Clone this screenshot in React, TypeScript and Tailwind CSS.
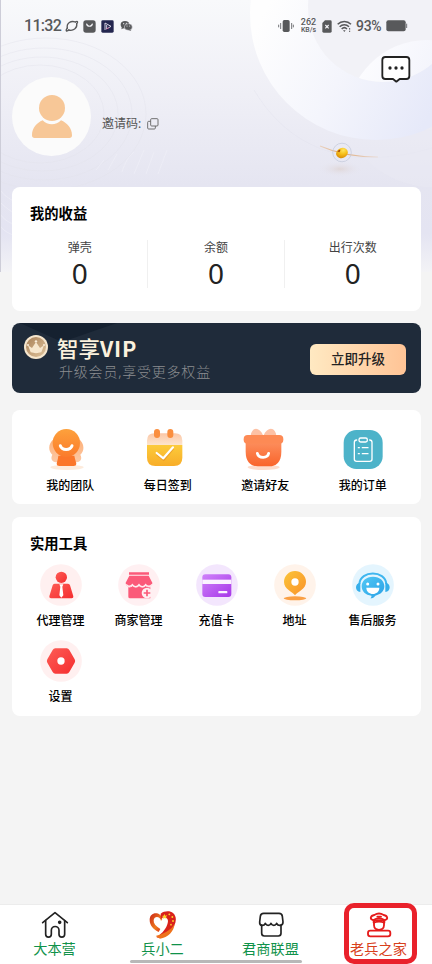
import type { ReactNode } from "react"

const cjk = "font-['Noto_Sans','Noto_Sans_CJK_SC',sans-serif]"

function HeaderArt(){
  return(
    <svg className="absolute left-0 top-0" width="432" height="272" viewBox="0 0 432 272" fill="none">
      <defs>
        <linearGradient id="sky" x1="0" y1="0" x2="0" y2="1">
          <stop offset="0" stopColor="#f8f9fb" />
          <stop offset="0.35" stopColor="#efeff6" />
          <stop offset="0.68" stopColor="#e5e5f1" />
          <stop offset="0.86" stopColor="#e4e4f2" />
          <stop offset="1" stopColor="#f3f3f6" />
        </linearGradient>
        <linearGradient id="ring" x1="260" y1="20" x2="432" y2="110" gradientUnits="userSpaceOnUse">
          <stop offset="0" stopColor="#fefefe" />
          <stop offset="0.5" stopColor="#f4f5fc" />
          <stop offset="1" stopColor="#e6e9f9" />
        </linearGradient>
        <linearGradient id="petal" x1="360" y1="50" x2="425" y2="80" gradientUnits="userSpaceOnUse">
          <stop offset="0" stopColor="#fdfdff" />
          <stop offset="1" stopColor="#f4f5fc" />
        </linearGradient>
        <linearGradient id="orbit" x1="318" y1="0" x2="380" y2="0" gradientUnits="userSpaceOnUse">
          <stop offset="0" stopColor="#e9b98b" stopOpacity="0.4" />
          <stop offset="0.4" stopColor="#dda36b" />
          <stop offset="1" stopColor="#e9b98b" stopOpacity="0.2" />
        </linearGradient>
        <radialGradient id="glow">
          <stop offset="0" stopColor="#d9c8c0" stopOpacity="0.5" />
          <stop offset="1" stopColor="#e4e4f0" stopOpacity="0" />
        </radialGradient>
        <radialGradient id="gold" cx="0.7" cy="0.3" r="0.8">
          <stop offset="0" stopColor="#ffe45c" />
          <stop offset="0.5" stopColor="#f6be18" />
          <stop offset="1" stopColor="#d88a08" />
        </radialGradient>
        <clipPath id="inner"><circle cx="383" cy="7" r="75" /></clipPath>
      </defs>
      <rect width="432" height="272" fill="url(#sky)" />
      <g stroke="#e2e2ec" strokeOpacity="0.45">
        <ellipse cx="46" cy="114" rx="100" ry="76" />
        <ellipse cx="44" cy="114" rx="88" ry="66" />
        <ellipse cx="42" cy="114" rx="76" ry="57" />
        <ellipse cx="40" cy="114" rx="64" ry="49" />
      </g>
      <g stroke="#f0f0f8" strokeOpacity="0.55">
        <path d="M96 170l8-10M108 170l9-16M122 172c3-10 7-16 12-20M134 174l10-24M146 174l8-22M158 174l9-24" />
        <path d="M0 190c6 8 14 12 24 14M0 202c8 8 14 12 24 14M0 214c6 8 12 10 20 12M0 226c5 6 10 8 16 10" />
      </g>
      <path d="M254 90C290 150 350 172 432 148" stroke="#dfdfea" strokeOpacity="0.35" />
      <path d="M352 138C366 165 388 182 424 187L432 187V130z" fill="#e9e9f4" fillOpacity="0.5" />
      <circle cx="376" cy="14" r="126" fill="url(#ring)" />
      <circle cx="383" cy="7" r="75" fill="#f2f2f7" />
      <circle cx="427" cy="120" r="80" fill="url(#petal)" clipPath="url(#inner)" />
      <ellipse cx="340" cy="169" rx="22" ry="8" fill="url(#glow)" />
      <path d="M320 146C336 153 354 157 378 157" stroke="url(#orbit)" strokeWidth="1.2" />
      <circle cx="342" cy="152.500" r="9.300" stroke="#c3c8da" strokeWidth="0.7" />
      <ellipse cx="342" cy="153" rx="6" ry="5" transform="rotate(-25 342 153)" fill="url(#gold)" />
      <path d="M337.500 151.500c1-1.600 2-2 3-1.800l-1 2.600z" fill="#a34a10" />
      <path d="M0.500 0V272" stroke="#cdcdd8" />
    </svg>
  )
}

function StatusBar(){
  return(
    <div className="h-[52px] pl-6 pr-[24px] flex items-center justify-between text-[#58595b]">

      <div className="flex items-center">
        <span className="w-[41px] font-['Roboto',sans-serif] font-medium text-[16px] leading-none tracking-[-0.7px]">11:32</span>

        <svg width="14" height="14" viewBox="0 0 42 42" fill="none" stroke="currentColor" strokeWidth="4" strokeLinecap="round">
          <path d="M7 27C4 12 18 4 31 9" /><path d="M35 14C38 28 24 37 11 33" />
          <path d="M7 27c-6 8-3 12 4 6M31 9c7-4 9 0 4 5" />
        </svg>

        <svg className="ml-[4px]" width="13" height="13" viewBox="0 0 39 39">
          <rect x="1" y="1" width="37" height="37" rx="8" fill="currentColor" />
          <path d="M11 12c2 9 15 9 17 0" fill="none" stroke="#f3f3f7" strokeWidth="3.500" strokeLinecap="round" />
        </svg>

        <svg className="ml-[5px]" width="13" height="13" viewBox="0 0 39 39" fill="none">
          <rect x="1" y="1" width="37" height="37" rx="4" fill="#23264f" />
          <path d="M12 9v21M12 9l18 10-13 8V15" stroke="#ebe5f3" strokeWidth="2.600" />
          <path d="M17 27l6-4" stroke="#d4548e" strokeWidth="2.600" />
        </svg>

        <svg className="ml-[6px]" width="13" height="12" viewBox="0 0 39 36">
          <ellipse cx="15" cy="14" rx="13" ry="11" fill="currentColor" />
          <path d="M6 20l-2 8 8-4z" fill="currentColor" />
          <ellipse cx="25" cy="21" rx="12" ry="10" fill="currentColor" stroke="#f1f1f6" strokeWidth="1.500" />
          <path d="M30 28l4 5-9-3z" fill="currentColor" />
          <g fill="#f1f1f6"><circle cx="11" cy="11" r="1.800" /><circle cx="19" cy="10" r="1.800" /><circle cx="21" cy="18" r="1.500" /><circle cx="29" cy="18" r="1.500" /></g>
        </svg>
      </div>

      <div className="flex items-center font-['Roboto',sans-serif] font-medium">
        <svg width="16" height="14" viewBox="0 0 48 42">
          <rect x="14" y="3" width="21" height="36" rx="5" fill="currentColor" />
          <path d="M8 12v18M2 17v8M41 12v18M46 17v8" stroke="currentColor" strokeWidth="2.500" />
        </svg>

        <div className="ml-[5px] w-[19px] text-center leading-[8px] text-[9px]">
          <div>262</div>
          <div className="text-[7px] whitespace-nowrap">KB/s</div>
        </div>

        <svg className="ml-[4px]" width="10" height="13" viewBox="0 0 30 39">
          <path d="M9 1h16a4 4 0 0 1 4 4v29a4 4 0 0 1-4 4H5a4 4 0 0 1-4-4V9z" fill="currentColor" />
          <path d="M10 15l10 10M20 15L10 25" stroke="#f3f3f7" strokeWidth="3.500" />
        </svg>

        <svg className="ml-[5px]" width="15" height="13" viewBox="0 0 45 39" fill="none" stroke="currentColor" strokeWidth="4.500">
          <path d="M2 13C13 2 31 2 42 13M8 20c8-8 20-8 28 0M14 27c5-5 11-5 16 0" />
          <path d="M18 31h8l-4 5z" fill="currentColor" stroke="none" />
          <path d="M38 24v5M38 32v4" strokeWidth="3" />
        </svg>

        <span className="ml-[4px] w-[27px] text-[14px] leading-none tracking-[-0.3px]">93%</span>

        <svg className="ml-[3px]" width="22" height="12" viewBox="0 0 66 36">
          <rect x="1" y="1" width="58" height="33" rx="6" fill="currentColor" />
          <path d="M62 11v13" stroke="currentColor" strokeWidth="2.500" />
        </svg>
      </div>

    </div>
  )
}

function Profile(){
  return(
    <div className="h-[104px] pl-3 pr-[20px] flex">
      <div className="self-end w-[79px] h-[79px] rounded-full bg-[#fbfbfb] flex items-center justify-center">
        <svg width="42" height="46" viewBox="0 0 126 138" fill="#f7c797">
          <circle cx="63" cy="42" r="39" />
          <path d="M35 79c14 16 41 16 55 0 18 8 33 23 33 45q0 8-8 8H11q-8 0-8-8c0-22 14-37 32-45z" />
        </svg>
      </div>

      <div className="ml-[11px] mt-[63px] h-[18px] flex items-center text-[12px] text-[#555]">
        <span>邀请码:</span>
        <svg className="ml-[6px]" width="12" height="12" viewBox="0 0 36 36" fill="none" stroke="#666" strokeWidth="2.800">
          <rect x="11" y="2" width="22" height="22" rx="3" />
          <path d="M11 10H5q-3 0-3 3v17q0 3 3 3h17q3 0 3-3v-6" />
        </svg>
      </div>

      <svg className="ml-auto mt-[3px]" width="31" height="28" viewBox="0 0 93 84" fill="none">
        <path d="M13 6H76q9 0 9 9v48q0 9-9 9H56L46 80 36 72H13q-9 0-9-9V15q0-9 9-9z" fill="#fff" stroke="#222" strokeWidth="5.500" strokeLinejoin="round" />
        <circle cx="27" cy="39" r="5" fill="#222" /><circle cx="45" cy="39" r="5" fill="#222" /><circle cx="63" cy="39" r="5" fill="#222" />
      </svg>
    </div>
  )
}

const stats = [
  { label: "弹壳", value: 0 },
  { label: "余额", value: 0 },
  { label: "出行次数", value: 0 }
]

function Medal(){
  return(
    <svg width="26" height="26" viewBox="0 0 78 78">
      <defs>
        <linearGradient id="medal" x1="0" y1="0" x2="1" y2="1">
          <stop offset="0" stopColor="#a98158" /><stop offset="1" stopColor="#dfc39c" />
        </linearGradient>
      </defs>
      <circle cx="39" cy="39" r="36" fill="#f6e6cd" />
      <circle cx="39" cy="39" r="30" fill="url(#medal)" />
      <path d="M15 34l12 8 12-18 12 18 12-8-8 21q-16 5-32 0z" fill="#f6e6cd" />
      <g fill="#f9edda"><circle cx="39" cy="22" r="3.500" /><circle cx="15" cy="33" r="3" /><circle cx="63" cy="33" r="3" /></g>
    </svg>
  )
}

// 44px artwork used in the shortcut row
function TeamIcon(){
  return(
    <svg width="44" height="44" viewBox="0 0 132 132">
      <defs>
        <linearGradient id="team" x1="0" y1="0" x2="0" y2="1"><stop offset="0" stopColor="#fda13c" /><stop offset="1" stopColor="#fb7b2c" /></linearGradient>
        <linearGradient id="hair" x1="0" y1="0" x2="0" y2="1"><stop offset="0" stopColor="#fdb078" /><stop offset="1" stopColor="#fdc9a6" /></linearGradient>
      </defs>
      <ellipse cx="57" cy="121" rx="50" ry="8" fill="#fdebdc" />
      <path d="M18 36C1 48-1 70 13 83c-6 12-2 20 10 23h64c12-3 16-11 10-23 14-13 12-35-5-47z" fill="url(#hair)" />
      <path d="M31 86h48c2 12 6 20 6 25q0 6-8 6H34q-8 0-8-6c0-5 4-13 5-25z" fill="#fb762a" />
      <ellipse cx="55" cy="48" rx="41" ry="42" fill="url(#team)" />
      <path d="M37 56c5 15 30 15 35 0" fill="none" stroke="#fff" strokeWidth="9" strokeLinecap="round" />
    </svg>
  )
}

function CalendarIcon(){
  return(
    <svg width="44" height="44" viewBox="0 0 132 132">
      <defs>
        <linearGradient id="cal" x1="0" y1="0" x2="0" y2="1"><stop offset="0" stopColor="#fccb3b" /><stop offset="1" stopColor="#f8ad29" /></linearGradient>
        <linearGradient id="calTop" x1="0" y1="0" x2="0" y2="1"><stop offset="0" stopColor="#fbc7a7" /><stop offset="1" stopColor="#fde5cd" /></linearGradient>
      </defs>
      <path d="M3 54V41q0-22 22-22h62q22 0 22 22v13z" fill="url(#calTop)" />
      <path d="M3 54h106v38q0 25-25 25H28Q3 117 3 92z" fill="url(#cal)" />
      <rect x="24" y="6" width="18" height="27" rx="9" fill="#fa8e3e" />
      <rect x="64" y="6" width="18" height="27" rx="9" fill="#fa8e3e" />
      <path d="M33 82l20 16 29-34" fill="none" stroke="#e18c22" strokeWidth="7" opacity="0.55" />
      <path d="M32 78l20 16 29-33" fill="none" stroke="#fff" strokeWidth="6.500" strokeLinecap="round" strokeLinejoin="round" />
    </svg>
  )
}

function GiftIcon(){
  return(
    <svg width="44" height="44" viewBox="0 0 132 132">
      <defs>
        <linearGradient id="gift" x1="0" y1="0" x2="0" y2="1"><stop offset="0" stopColor="#fd9160" /><stop offset="1" stopColor="#f9642b" /></linearGradient>
      </defs>
      <ellipse cx="62" cy="121" rx="48" ry="8" fill="#fddccc" />
      <path d="M61 26C51 4 36 0 28 12c-4 6-6 11-3 18h73c3-7 1-12-3-18-8-12-24-8-34 14z" fill="#fdc1a5" />
      <path d="M8 40h107v35c0 30-16 43-36 43H44C24 118 8 105 8 75z" fill="url(#gift)" />
      <rect x="2" y="24" width="119" height="26" rx="12" fill="#fd8a55" />
      <path d="M43 79c4 16 31 16 34 0" fill="none" stroke="#fff" strokeWidth="8.500" strokeLinecap="round" />
    </svg>
  )
}

function OrderIcon(){
  return(
    <svg width="44" height="44" viewBox="0 0 132 132" fill="none">
      <rect x="8" y="9" width="117" height="117" rx="38" fill="#4db3c9" />
      <g stroke="#fff" strokeWidth="4" strokeLinecap="round">
        <path d="M47 39q-7 0-7 7v51q0 6 7 6h39q7 0 7-6V46q0-7-7-7" />
        <rect x="54" y="33" width="25" height="12" rx="5" />
        <path d="M64 62h17M64 80h17M52 62h3M52 80h3" />
      </g>
    </svg>
  )
}

// 42px round icons of the tools grid
function AgentIcon(){
  return(
    <svg width="42" height="42" viewBox="0 0 126 126">
      <defs><linearGradient id="agent" x1="0" y1="0" x2="1" y2="1"><stop offset="0" stopColor="#fd5d56" /><stop offset="1" stopColor="#f52d2f" /></linearGradient></defs>
      <circle cx="63" cy="63" r="62.500" fill="#fff0f0" />
      <circle cx="64" cy="40" r="17" fill="url(#agent)" />
      <path d="M44 59h40q5 0 6 5l10 33q1 6-5 6H33q-6 0-5-6l10-33q1-5 6-5z" fill="url(#agent)" />
      <path d="M58 61h12l-3 7 3 26-6 7-6-7 3-26z" fill="#fff" />
    </svg>
  )
}

function ShopIcon(){
  return(
    <svg width="42" height="42" viewBox="0 0 126 126">
      <circle cx="63" cy="63" r="62.500" fill="#fff0f2" />
      <path d="M33 25h60v7H33zM34 35h58l11 21c0 14-15 15-20 6-5 9-16 9-20 0-5 9-16 9-20 0-5 9-20 8-20-6z" fill="#fb5a79" />
      <path d="M31 70c5 1 9 0 13-4 7 6 13 6 19 0 7 6 14 6 20 0 5 4 9 5 14 4v33H36q-5 0-5-5z" fill="#fb5a79" />
      <path d="M25 61c4 8 13 7 18 1 5 8 15 8 20 0 5 8 15 8 20 0 5 6 14 7 19-1" fill="none" stroke="#fff0f2" strokeWidth="4" />
      <circle cx="87" cy="87" r="16" fill="#fff0f2" />
      <path d="M87 77v20M77 87h20" stroke="#fb5a79" strokeWidth="5" />
    </svg>
  )
}

function CardIcon(){
  return(
    <svg width="42" height="42" viewBox="0 0 126 126">
      <defs><linearGradient id="card" x1="0" y1="0" x2="1" y2="1"><stop offset="0" stopColor="#cf82fa" /><stop offset="1" stopColor="#a738e8" /></linearGradient></defs>
      <circle cx="63" cy="63" r="62.500" fill="#f3e6fd" />
      <rect x="19" y="31" width="87" height="68" rx="9" fill="url(#card)" />
      <path d="M19 47h87v13H19z" fill="#fbf3ff" />
      <rect x="67" y="81" width="27" height="7" rx="2" fill="#fbf3ff" />
    </svg>
  )
}

function AddressIcon(){
  return(
    <svg width="42" height="42" viewBox="0 0 126 126">
      <defs><linearGradient id="pin" x1="0" y1="0" x2="1" y2="1"><stop offset="0" stopColor="#fbc437" /><stop offset="1" stopColor="#fa922b" /></linearGradient></defs>
      <circle cx="63" cy="63" r="62.500" fill="#fff3ea" />
      <ellipse cx="63" cy="103" rx="34" ry="6" fill="#fa9f43" />
      <path d="M63 94C56 83 30 76 30 54a33 33 0 0 1 66 0c0 22-26 29-33 40z" fill="url(#pin)" />
      <circle cx="63" cy="54" r="11" fill="#fff" />
    </svg>
  )
}

function ServiceIcon(){
  return(
    <svg width="42" height="42" viewBox="0 0 126 126">
      <defs><linearGradient id="svc" x1="0" y1="0" x2="1" y2="1"><stop offset="0" stopColor="#50c8f5" /><stop offset="1" stopColor="#2ba0e6" /></linearGradient></defs>
      <circle cx="63" cy="63" r="62.500" fill="#e4f5fe" />
      <path d="M22 60C25 18 100 18 103 60" fill="none" stroke="#3fb6ef" strokeWidth="6" />
      <path d="M25 56q-13 2-13 14t13 14zM100 56q13 2 13 14t-13 14z" fill="#35aeea" />
      <path d="M63 38c21 0 34 13 34 29 0 14-11 25-27 28-3 5-8 8-15 8 3-3 4-5 3-8-17-1-29-13-29-28 0-16 13-29 34-29z" fill="url(#svc)" />
      <circle cx="47" cy="60" r="4.500" fill="#fff" /><circle cx="78" cy="60" r="4.500" fill="#fff" />
      <path d="M43 71h39c0 25-39 25-39 0z" fill="#fff" />
    </svg>
  )
}

function SettingsIcon(){
  return(
    <svg width="42" height="42" viewBox="0 0 126 126">
      <circle cx="63" cy="63" r="62.500" fill="#fff0f0" />
      <path d="M46 25h34q5 0 8 5l16 28q3 5 0 10L88 96q-3 5-8 5H46q-5 0-8-5L22 68q-3-5 0-10l16-28q3-5 8-5z" fill="url(#agent)" />
      <circle cx="63" cy="63" r="11" fill="#fff" />
    </svg>
  )
}

function HomeTab(){
  return(
    <svg width="28" height="28" viewBox="0 0 84 84" fill="none" stroke="#222" strokeWidth="5" strokeLinecap="round" strokeLinejoin="round">
      <path d="M5 35L42 5l37 30" />
      <path d="M14 29v41a8 8 0 0 0 17 0V58a11 11 0 0 1 23 0v12a8 8 0 0 0 17 0V29" />
      <circle cx="56" cy="34" r="3" fill="#222" />
    </svg>
  )
}

function HeartTab(){
  return(
    <svg width="28" height="28" viewBox="0 0 84 84">
      <defs><linearGradient id="heart" x1="0" y1="0" x2="1" y2="1"><stop offset="0" stopColor="#c92318" /><stop offset="0.6" stopColor="#ee7a1d" /><stop offset="1" stopColor="#d9281b" /></linearGradient></defs>
      <path d="M40 24C36 1 2 0 2 27c0 16 11 28 27 36l5-9C20 46 13 37 14 28c2-15 20-12 22 2z" fill="url(#heart)" />
      <path d="M35 25V8C46-1 64-1 72 6c15 13 9 37-9 54-10 9-24 19-41 21 6-3 9-6 10-10 12-8 24-25 25-41 0-12-15-16-22-5z" fill="#d9221b" />
      <path d="M20 75c18-5 46-16 57-37-2 23-20 41-44 45z" fill="#ee721b" />
      <g fill="#ffd629"><path d="M46 9l3 5 6-1-4 5 2 5-6-2-4 3 0-6-4-3 5-1z" /><circle cx="61" cy="10" r="2.800" /><circle cx="70" cy="18" r="2.800" /><circle cx="72" cy="30" r="2.800" /><circle cx="66" cy="41" r="2.500" /></g>
    </svg>
  )
}

function StoreTab(){
  return(
    <svg width="28" height="28" viewBox="0 0 84 84" fill="none" stroke="#222" strokeWidth="5" strokeLinecap="round" strokeLinejoin="round">
      <path d="M20 7h46q9 0 10 9l2 17c0 13-15 13-19 4-4 8-13 8-17 0-4 8-13 8-17 0-4 9-18 9-17-4l2-17q1-9 10-9z" />
      <path d="M14 42v25q0 8 8 8h42q8 0 8-8V42" />
    </svg>
  )
}

function VeteranTab(){
  return(
    <svg width="28" height="28" viewBox="0 0 84 84" fill="none" stroke="#e51b1b" strokeWidth="5.500" strokeLinecap="round" strokeLinejoin="round">
      <path d="M26 28C12 24 17 14 28 12q14-9 28 0c11 2 16 12 2 16z" />
      <path d="M26 27c8-6 24-6 32 0v8q-16-6-32 0zM37 17h11" />
      <path d="M27 35v8c0 18 30 18 30 0v-8" />
      <rect x="9" y="59" width="67" height="17" rx="7" />
    </svg>
  )
}

const shortcuts = [
  { label: "我的团队", icon: <TeamIcon /> },
  { label: "每日签到", icon: <CalendarIcon /> },
  { label: "邀请好友", icon: <GiftIcon /> },
  { label: "我的订单", icon: <OrderIcon /> }
]

const tools = [
  { label: "代理管理", icon: <AgentIcon /> },
  { label: "商家管理", icon: <ShopIcon /> },
  { label: "充值卡", icon: <CardIcon /> },
  { label: "地址", icon: <AddressIcon /> },
  { label: "售后服务", icon: <ServiceIcon /> },
  { label: "设置", icon: <SettingsIcon /> }
]

const tabs: { label: string; icon: ReactNode; active?: boolean }[] = [
  { label: "大本营", icon: <HomeTab /> },
  { label: "兵小二", icon: <HeartTab /> },
  { label: "君商联盟", icon: <StoreTab /> },
  { label: "老兵之家", icon: <VeteranTab />, active: true }
]

export default function App(){

  return(

    <div className={`relative w-[432px] h-[964px] overflow-hidden bg-[#f4f4f4] flex flex-col ${cjk}`}>

      <HeaderArt />

      <div className="relative flex-1 flex flex-col">

        <StatusBar />
        <Profile />

        {/* INGRESOS */}

        <section className="mt-[31px] ml-3 w-[409px] h-[124px] rounded-lg bg-white">

          <h2 className="pt-[16px] pl-[18px] text-[14.300px] leading-[21px] font-bold text-black">我的收益</h2>

          <div className="mt-[16px] grid grid-cols-3 divide-x divide-[#f0f0f0]">
            {stats.map((s)=>(
              <div key={s.label} className="h-[48px] flex flex-col items-center">
                <span className="-mt-px text-[12px] leading-[18px] text-[#444]">{s.label}</span>
                <span className="-mt-[2px] text-[28px] leading-[36px] text-[#222]">{s.value}</span>
              </div>
            ))}
          </div>

        </section>

        {/* VIP */}

        <section className="relative mt-3 ml-3 w-[409px] h-[70px] rounded-lg bg-[#1f2b3a] overflow-hidden flex items-start">

          <svg className="absolute left-0 top-0" width="110" height="20" viewBox="0 0 110 20">
            <path d="M8 0h97L50 19z" fill="#152130" />
          </svg>

          <div className="relative ml-[11px] mt-[11px]"><Medal /></div>

          <div className="relative ml-[8px] mt-[11px]">
            <p className="font-['Noto_Sans_CJK_SC',sans-serif] text-[21.500px] leading-[28px] font-medium text-[#fbf1dd] whitespace-nowrap">
              智享<span className="font-bold tracking-[0.8px]">VIP</span>
            </p>
            <p className="ml-[2px] text-[14px] leading-[20px] tracking-[0.800px] font-light text-[#8b8d90] whitespace-nowrap">升级会员,享受更多权益</p>
          </div>

          <button className="ml-auto mr-[15px] mt-[21px] w-[96px] h-[31px] rounded-md bg-linear-to-r from-[#ffe9c2] to-[#ffc496] text-[13.500px] leading-[31px] font-medium text-[#222]">
            立即升级
          </button>

        </section>

        {/* ACCESOS */}

        <section className="mt-[17px] ml-3 w-[409px] h-[94px] rounded-lg bg-white px-[9.500px] pt-[17px] grid grid-cols-4">
          {shortcuts.map((item)=>(
            <div key={item.label} className="flex flex-col items-center">
              {item.icon}
              <span className="mt-[6px] text-[12px] leading-[18px] font-medium text-black">{item.label}</span>
            </div>
          ))}
        </section>

        {/* HERRAMIENTAS */}

        <section className="mt-[12.500px] ml-3 w-[409px] h-[199px] rounded-lg bg-white">

          <h2 className="pt-[16px] pl-[18px] text-[14.300px] leading-[21px] font-bold text-black">实用工具</h2>

          <div className="mt-[10px] px-[9.500px] grid grid-cols-5 auto-rows-[76.500px]">
            {tools.map((item)=>(
              <div key={item.label} className="flex flex-col items-center">
                {item.icon}
                <span className="mt-[6px] text-[12px] leading-[18px] font-medium text-black">{item.label}</span>
              </div>
            ))}
          </div>

        </section>

      </div>

      {/* TABS */}

      <nav className="relative h-[60px] bg-white border-t border-[#ececec] grid grid-cols-4">

        {tabs.map((tab)=>(
          <div key={tab.label} className="pt-[6px] pl-px flex flex-col items-center">
            {tab.icon}
            <span className={tab.active ? "text-[14.200px] leading-[20px] text-[#d8401c]" : "text-[14.200px] leading-[20px] text-[#10924a]"}>
              {tab.label}
            </span>
          </div>
        ))}

        <div className="absolute left-[130px] bottom-[1px] w-[172px] h-[3px] rounded-full bg-[#b8b8b8]" />
        <div className="absolute left-[344px] -top-[2px] w-[73px] h-[61px] rounded-[10px] border-[5px] border-[#e9212b]" />

      </nav>

    </div>
  )
}
